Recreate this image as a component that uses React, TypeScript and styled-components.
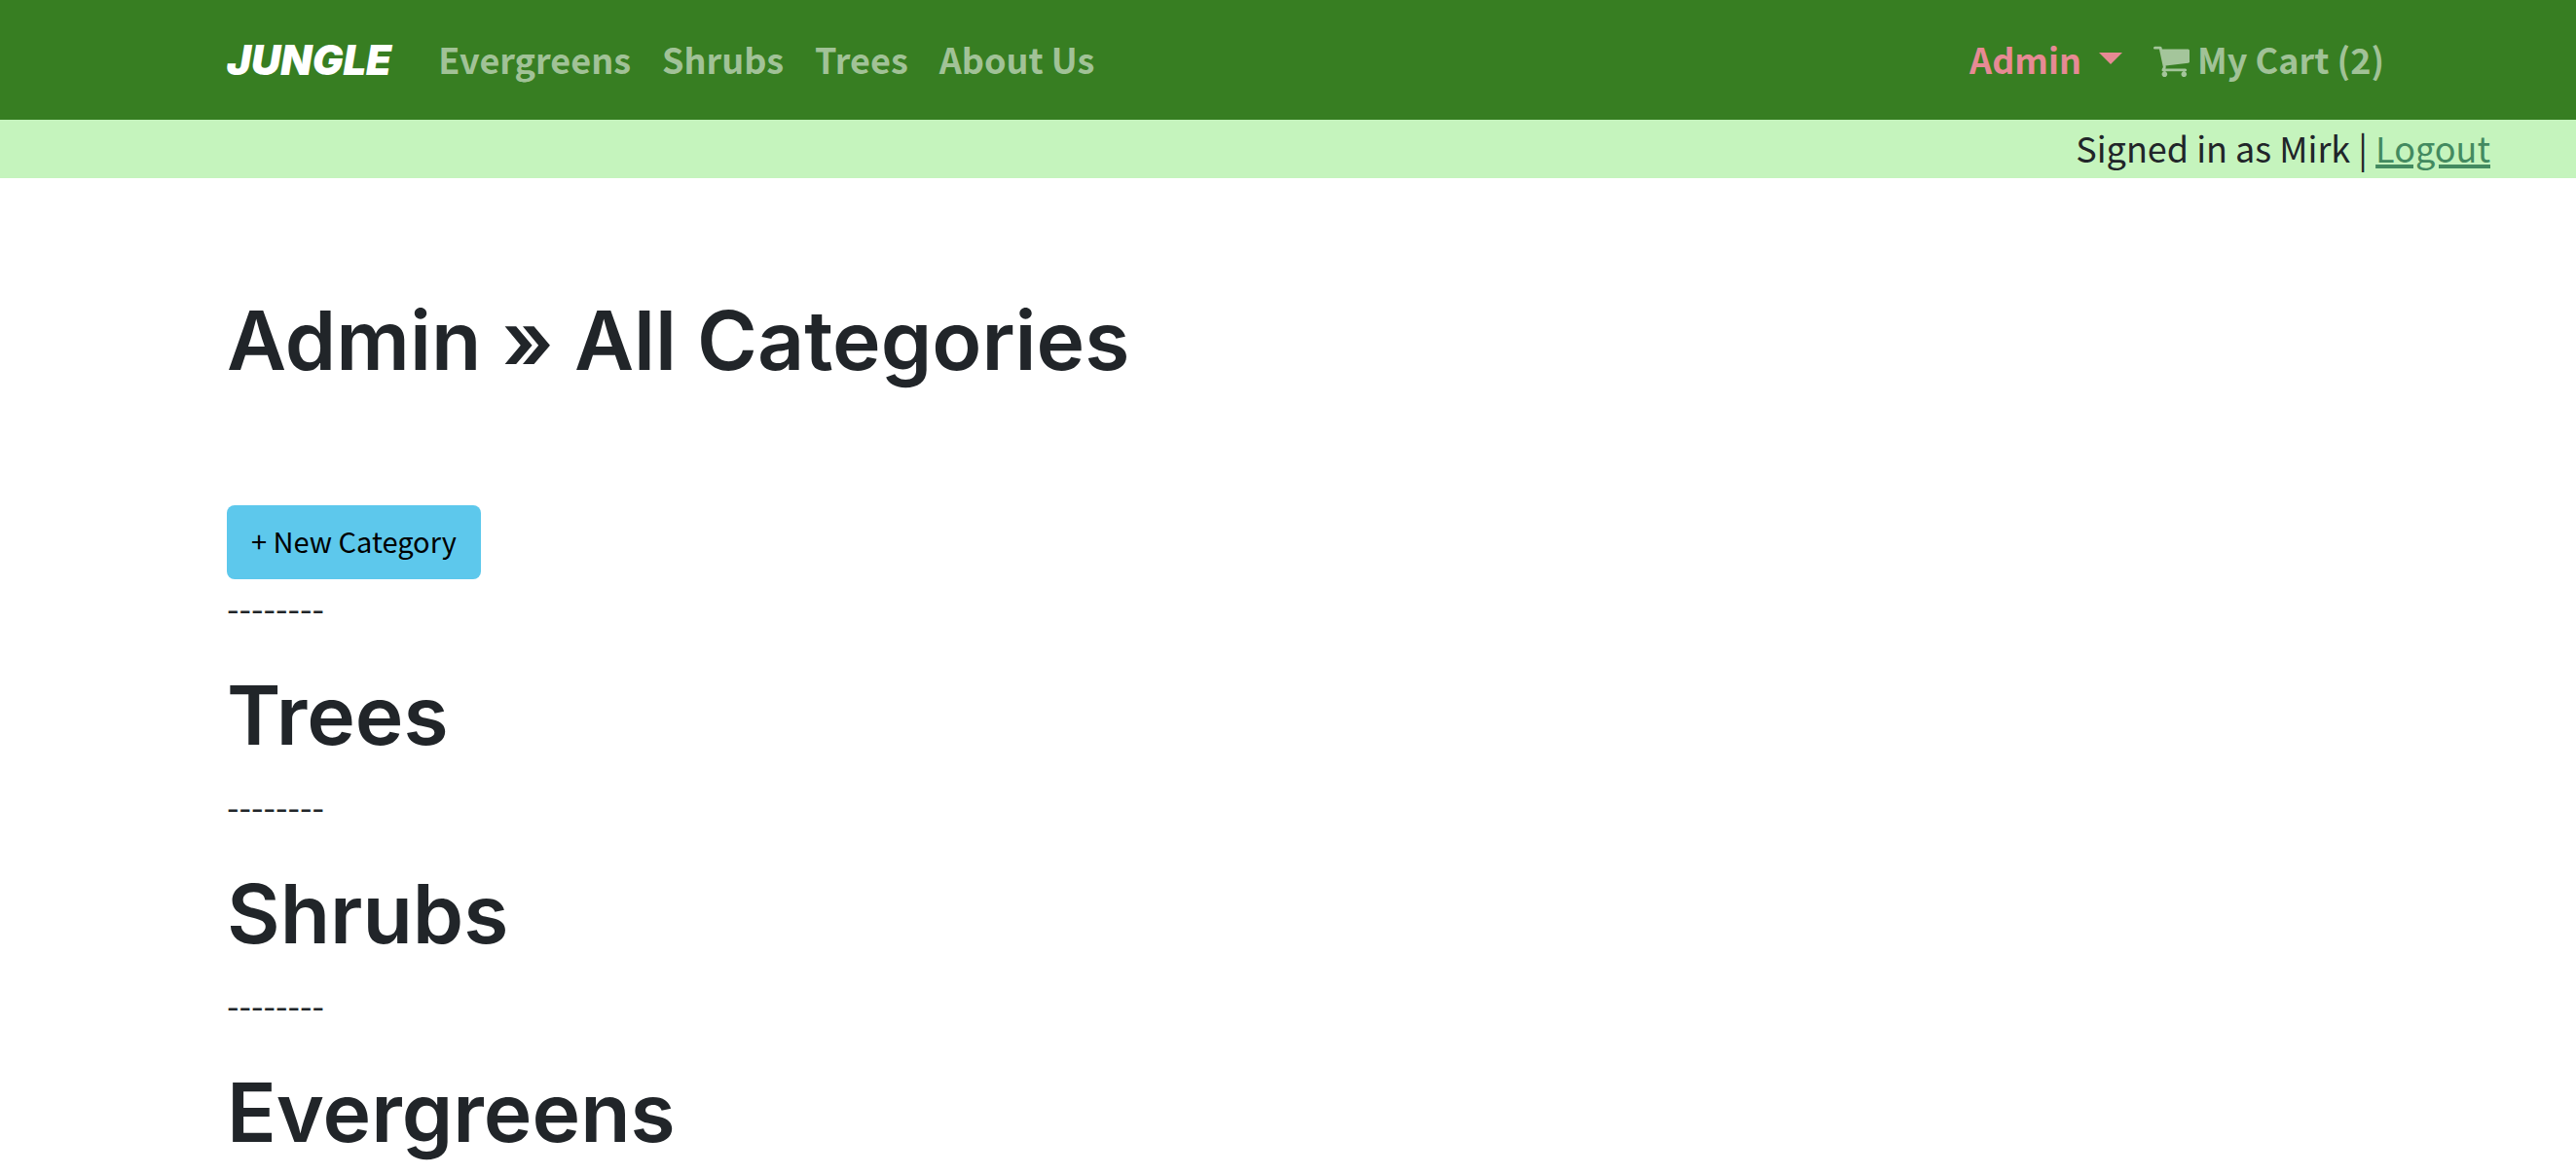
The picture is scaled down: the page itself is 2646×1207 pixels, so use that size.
import React from "react";
import styled, { createGlobalStyle } from "styled-components";

const GlobalStyle = createGlobalStyle`
  *, *::before, *::after { box-sizing: border-box; }
  body {
    margin: 0;
    background: #fff;
    color: #212529;
    font-family: "Noto Sans CJK JP", "Noto Sans", sans-serif;
    font-size: 36px;
    line-height: 56px;
  }
`;

const displayFont = `Inter, "Open Sans", sans-serif`;

const NavBar = styled.nav`
  background: #377e22;
  padding: 16px 0 15px;
`;

const Container = styled.div`
  width: 100%;
  max-width: 2284px;
  margin: 0 auto;
  padding-left: 52px;
`;

const NavRow = styled(Container)`
  display: flex;
  align-items: center;
`;

const Brand = styled.a`
  margin-right: 32px;
  color: #fff;
  font-family: ${displayFont};
  font-size: 42px;
  font-style: italic;
  font-weight: 900;
  line-height: 60px;
  text-decoration: none;
`;

const NavList = styled.ul<{ $end?: boolean }>`
  display: flex;
  margin: 0;
  margin-left: ${(p) => (p.$end ? "auto" : "0")};
  padding: 0;
  list-style: none;
`;

const NavLink = styled.a`
  display: flex;
  align-items: center;
  gap: 8px;
  padding: 16px 16px 20px;
  color: rgba(255, 255, 255, 0.55);
  font-weight: 700;
  text-decoration: none;
  white-space: nowrap;
`;

const DropdownToggle = styled.button`
  display: flex;
  align-items: center;
  gap: 18px;
  padding: 16px 16px 20px;
  border: 0;
  background: none;
  color: #e78a94;
  font: inherit;
  font-weight: 700;
  cursor: pointer;
`;

const Caret = styled.span`
  border-top: 12px solid currentColor;
  border-right: 12px solid transparent;
  border-left: 12px solid transparent;
`;

const CartSvg = styled.svg`
  width: 37px;
  height: 44px;
  fill: currentColor;
`;

const SessionBar = styled.div`
  padding: 0 88px 4px;
  background: #c5f4bd;
  text-align: right;
`;

const LogoutLink = styled.a`
  color: #438a60;
  text-decoration-thickness: 4px;
`;

const PageHeader = styled.header`
  padding: 119px 0 121px;
`;

const Heading = styled.h1`
  margin: 0;
  font-family: ${displayFont};
  font-size: 84px;
  font-weight: 600;
  line-height: 96px;
`;

const NewButton = styled.a`
  display: block;
  width: fit-content;
  padding: 12px 25px 16px;
  border-radius: 8px;
  background: #5dc8ec;
  color: #000;
  font-size: 29px;
  line-height: 48px;
  text-decoration: none;
`;

const Category = styled.section`
  display: flex;
  flex-direction: column;
  gap: 36px;
  margin-bottom: 16px;
`;

const CartIcon = () => (
  <CartSvg viewBox="0 -179 1664 1971" aria-hidden="true">
    <path d="M640 1536q0 52-38 90t-90 38-90-38-38-90 38-90 90-38 90 38 38 90zm896 0q0 52-38 90t-90 38-90-38-38-90 38-90 90-38 90 38 38 90zm128-1088v512q0 24-16.5 42.5t-40.5 21.5l-1044 122q13 60 13 70 0 16-24 64h920q26 0 45 19t19 45-19 45-45 19h-1024q-26 0-45-19t-19-45q0-11 8-31.5t16-36 21.5-40 15.5-29.5l-177-823h-204q-26 0-45-19t-19-45 19-45 45-19h256q16 0 28.5 6.5t19.5 15.5 13 24.5 8 26 5.5 29.5 4.5 26h1201q26 0 45 19t19 45z" />
  </CartSvg>
);

const links = ["Evergreens", "Shrubs", "Trees", "About Us"];
const categories = ["Trees", "Shrubs", "Evergreens"];

export default function App() {
  return (
    <>
      <GlobalStyle />
      <NavBar>
        <NavRow>
          <Brand href="#">JUNGLE</Brand>
          <NavList>
            {links.map((label) => (
              <li key={label}>
                <NavLink href="#">{label}</NavLink>
              </li>
            ))}
          </NavList>
          <NavList $end>
            <li>
              <DropdownToggle type="button" aria-haspopup="menu">
                Admin
                <Caret />
              </DropdownToggle>
            </li>
            <li>
              <NavLink href="#">
                <CartIcon />
                My Cart (2)
              </NavLink>
            </li>
          </NavList>
        </NavRow>
      </NavBar>
      <SessionBar>
        Signed in as Mirk | <LogoutLink href="#">Logout</LogoutLink>
      </SessionBar>
      <Container as="main">
        <PageHeader>
          <Heading>Admin » All Categories</Heading>
        </PageHeader>
        <NewButton href="#">+ New Category</NewButton>
        {categories.map((name) => (
          <Category key={name}>
            <div>--------</div>
            <Heading as="h2">{name}</Heading>
          </Category>
        ))}
      </Container>
    </>
  );
}
